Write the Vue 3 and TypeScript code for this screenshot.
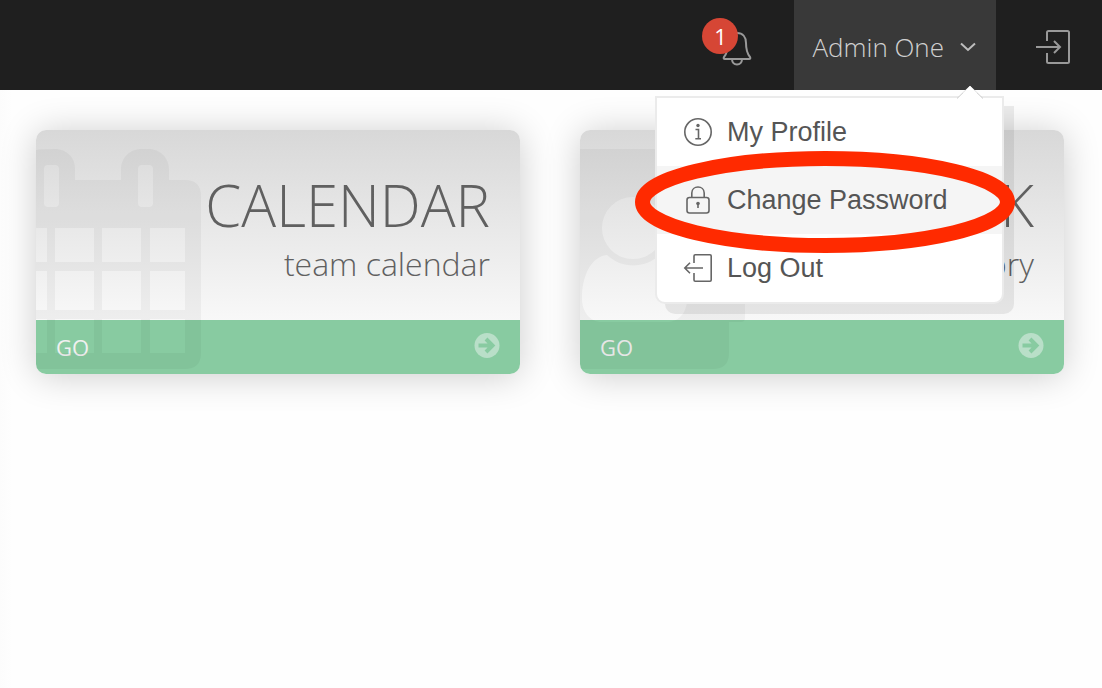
<script setup lang="ts">
import { ref } from 'vue'

interface Card {
  id: 'calendar' | 'book'
  title: string
  subtitle: string
}

interface MenuItem {
  id: 'profile' | 'password' | 'logout'
  label: string
}

const cards: Card[] = [
  { id: 'calendar', title: 'CALENDAR', subtitle: 'team calendar' },
  { id: 'book', title: 'BOOK', subtitle: 'directory' },
]

const menuItems: MenuItem[] = [
  { id: 'profile', label: 'My Profile' },
  { id: 'password', label: 'Change Password' },
  { id: 'logout', label: 'Log Out' },
]

const highlighted = ref<MenuItem['id']>('password')
const menuOpen = ref(true)
const notifications = ref(1)
</script>

<template>
  <div class="page">
    <header class="topbar">
      <button type="button" class="bell" aria-label="Notifications">
        <span class="bell-box">
          <svg width="30" height="36" viewBox="0 0 30 36" fill="none" stroke="#999" stroke-width="2" aria-hidden="true">
            <path d="M15 2 C9 2 6 6.500 6 12 C6 20 4.500 23 2 26 Q1 28 3 28 H27 Q29 28 28 26 C25.500 23 24 20 24 12 C24 6.500 21 2 15 2 Z" />
            <path d="M10 28.500 C10.500 35 19.500 35 20 28.500" />
          </svg>
          <span class="badge">{{ notifications }}</span>
        </span>
      </button>

      <div class="user">
        <button type="button" class="user-button" :aria-expanded="menuOpen" @click="menuOpen = !menuOpen">
          <span>Admin One</span>
          <svg width="16" height="10" viewBox="0 0 16 10" fill="none" stroke="#bdbdbd" stroke-width="2" aria-hidden="true">
            <path d="M1 1.500 L8 8 L15 1.500" />
          </svg>
        </button>

        <nav v-if="menuOpen" class="menu" aria-label="Account">
          <svg class="pointer" width="28" height="15" viewBox="0 0 28 15" aria-hidden="true">
            <path d="M0 15 L14 1 L28 15 Z" fill="#fff" />
            <path d="M1 13.500 L14 1 L27 13.500" fill="none" stroke="#ccc" stroke-width="1" />
            <path d="M7 8 L14 1 L21 8 Z" fill="#fff" />
          </svg>
          <ul>
            <li v-for="item in menuItems" :key="item.id" :class="{ active: item.id === highlighted }">
              <a href="#">
                <svg width="30" height="30" viewBox="0 0 30 30" fill="none" stroke="#666" stroke-width="1.600" aria-hidden="true">
                  <template v-if="item.id === 'profile'">
                    <circle cx="15" cy="15" r="13.200" />
                    <path d="M12.500 12.500 H15.500 V21.500 M12.300 21.700 H18" />
                    <circle cx="15" cy="8.500" r="1.700" fill="#666" stroke="none" />
                  </template>
                  <template v-else-if="item.id === 'password'">
                    <rect x="4" y="12.500" width="22" height="15.500" rx="2.500" />
                    <path d="M8.800 12.500 V8 C8.800 0 21.200 0 21.200 8 V12.500" />
                    <circle cx="15" cy="18.500" r="1.800" fill="#666" stroke="none" />
                    <path d="M15 18 V23" />
                  </template>
                  <template v-else>
                    <path d="M11 10 V3 Q11 1.800 12.200 1.800 H27 Q28.200 1.800 28.200 3 V27 Q28.200 28.200 27 28.200 H12.200 Q11 28.200 11 27 V20" />
                    <path d="M20 15 H2 M7 9.800 L1.800 15 L7 20.200" />
                  </template>
                </svg>
                <span>{{ item.label }}</span>
              </a>
              <svg v-if="item.id === highlighted" class="ring" viewBox="0 0 380 102" fill="none" stroke="#ff2a00" stroke-width="15" aria-hidden="true">
                <ellipse cx="190" cy="51" rx="182.500" ry="43.500" />
              </svg>
            </li>
          </ul>
        </nav>
      </div>

      <button type="button" class="exit" aria-label="Sign out">
        <svg width="36" height="36" viewBox="0 0 36 36" fill="none" stroke="#999" stroke-width="2" aria-hidden="true">
          <path d="M12 12 V3.500 Q12 2 13.500 2 H32.500 Q34 2 34 3.500 V32.500 Q34 34 32.500 34 H13.500 Q12 34 12 32.500 V24" />
          <path d="M1 18 H25 M19 12 L25 18 L19 24" />
        </svg>
      </button>
    </header>

    <main class="cards">
      <a v-for="card in cards" :key="card.id" href="#" class="card">
        <div class="card-text">
          <h2>{{ card.title }}</h2>
          <p>{{ card.subtitle }}</p>
        </div>
        <div class="card-foot">
          <span>GO</span>
          <svg width="26" height="28" viewBox="0 0 26 28" aria-hidden="true">
            <circle cx="13" cy="12.500" r="12.500" fill="#b9dfc8" />
            <path d="M4.500 12.500 H17 M12 6 L18.500 12.500 L12 19" fill="none" stroke="#88cba1" stroke-width="4" />
          </svg>
        </div>
        <svg class="art" width="166" height="244" viewBox="0 0 166 244" fill-rule="evenodd" aria-hidden="true">
          <path
            v-if="card.id === 'calendar'"
            d="M0 20 Q5 19 19 19 C31 19 39 28 39 38 V50 H85 V39 C85 28 94 19 105 19 H113 C124 19 133 28 133 39 V50 H149 Q165 50 165 66 V223 Q165 239 149 239 H0 V223 H11 V189 H0 V180 H11 V141 H0 V132 H11 V98 H0 Z
               M12 35 H19 Q23 35 23 39 V73 Q23 77 19 77 H12 Q8 77 8 73 V39 Q8 35 12 35 Z
               M106 35 H113 Q117 35 117 39 V73 Q117 77 113 77 H106 Q102 77 102 73 V39 Q102 35 106 35 Z
               M19 98 H58 V132 H19 Z M66 98 H105 V132 H66 Z M114 98 H149 V132 H114 Z
               M19 141 H58 V180 H19 Z M66 141 H105 V180 H66 Z M114 141 H149 V180 H114 Z
               M19 189 H58 V223 H19 Z M66 189 H105 V223 H66 Z M114 189 H149 V223 H114 Z"
          />
          <path
            v-else
            d="M0 19 H133 Q149 19 149 35 V145 H165 V188 Q165 192 161 192 H149 V223 Q149 239 133 239 H0 Z
               M53 67 A31 31 0 1 0 53 129 A31 31 0 1 0 53 67 Z
               M27 125 C10 127 2 148 2 168 C2 182 10 192 22 192 H86 C98 192 107 184 107 168 C107 148 98 127 80 125 C64 139 42 139 27 125 Z"
          />
        </svg>
      </a>
    </main>
  </div>
</template>

<style>
body {
  background: #fefefe;
}
</style>

<style scoped>
.page {
  min-height: 100vh;
  font-family: 'Open Sans', 'Noto Sans', sans-serif;
  background: linear-gradient(to right, #fcfcfc, #fefefe 12px);
}

button {
  border: 0;
  padding: 0;
  background: none;
  font: inherit;
  color: inherit;
  cursor: pointer;
}

svg {
  display: block;
  flex: none;
}

.topbar {
  display: flex;
  justify-content: flex-end;
  height: 90px;
  background: #1f1f1f;
}

.bell {
  display: flex;
  align-items: center;
  padding: 8px 42px 0 40px;
}

.bell-box {
  position: relative;
}

.badge {
  position: absolute;
  top: -13px;
  left: -20px;
  width: 36px;
  border-radius: 50%;
  background: #d64635;
  color: #fff;
  font-size: 22px;
  line-height: 36px;
  text-align: center;
}

.user {
  position: relative;
  display: flex;
  background: #393939;
}

.user-button {
  display: flex;
  align-items: center;
  gap: 16px;
  padding: 4px 20px 0 18px;
  font-size: 26px;
  font-weight: 300;
  line-height: 36px;
  color: #d0d0d0;
}

.exit {
  display: flex;
  align-items: center;
  padding: 4px 31px 0 39px;
}

.menu {
  position: absolute;
  z-index: 2;
  top: 96px;
  right: -8px;
  width: 345px;
  border: 2px solid #ebebeb;
  border-radius: 0 0 10px 10px;
  background: #fff;
  box-shadow: 10px 10px 0 rgba(0, 0, 0, 0.07);
  font-family: 'Liberation Sans', Arial, sans-serif;
}

.pointer {
  position: absolute;
  top: -13px;
  right: 18px;
}

.menu ul {
  margin: 0;
  padding: 0;
  list-style: none;
}

.menu li {
  position: relative;
}

.menu li.active {
  background: #f5f5f5;
}

.menu a {
  display: flex;
  align-items: center;
  gap: 14px;
  padding: 0 26px;
  font-size: 27px;
  line-height: 68px;
  color: #555;
  text-decoration: none;
}

.ring {
  position: absolute;
  z-index: 1;
  top: -15px;
  left: -22px;
  width: 380px;
  height: 102px;
  pointer-events: none;
}

.cards {
  display: grid;
  grid-template-columns: 1fr 1fr;
  gap: 60px;
  padding: 40px 38px 40px 36px;
}

.card {
  position: relative;
  overflow: hidden;
  border-radius: 10px;
  box-shadow: 0 2px 36px rgba(0, 0, 0, 0.2);
  color: #606060;
  text-decoration: none;
}

.card-text {
  padding: 45px 30px 36px;
  background: linear-gradient(#d8d8d8, #f8f8f8);
  text-align: right;
  font-weight: 300;
}

.card-text h2 {
  margin: 0 0 9px;
  font-size: 58px;
  font-weight: 300;
  line-height: 60px;
}

.card-text p {
  margin: 0;
  font-size: 32px;
  line-height: 40px;
}

.card-foot {
  display: flex;
  align-items: center;
  justify-content: space-between;
  padding: 0 20px;
  background: #88cba1;
  color: #f0f0f0;
  font-size: 22px;
  line-height: 54px;
}

.art {
  position: absolute;
  top: 0;
  left: 0;
  fill: rgba(0, 0, 0, 0.04);
}
</style>
